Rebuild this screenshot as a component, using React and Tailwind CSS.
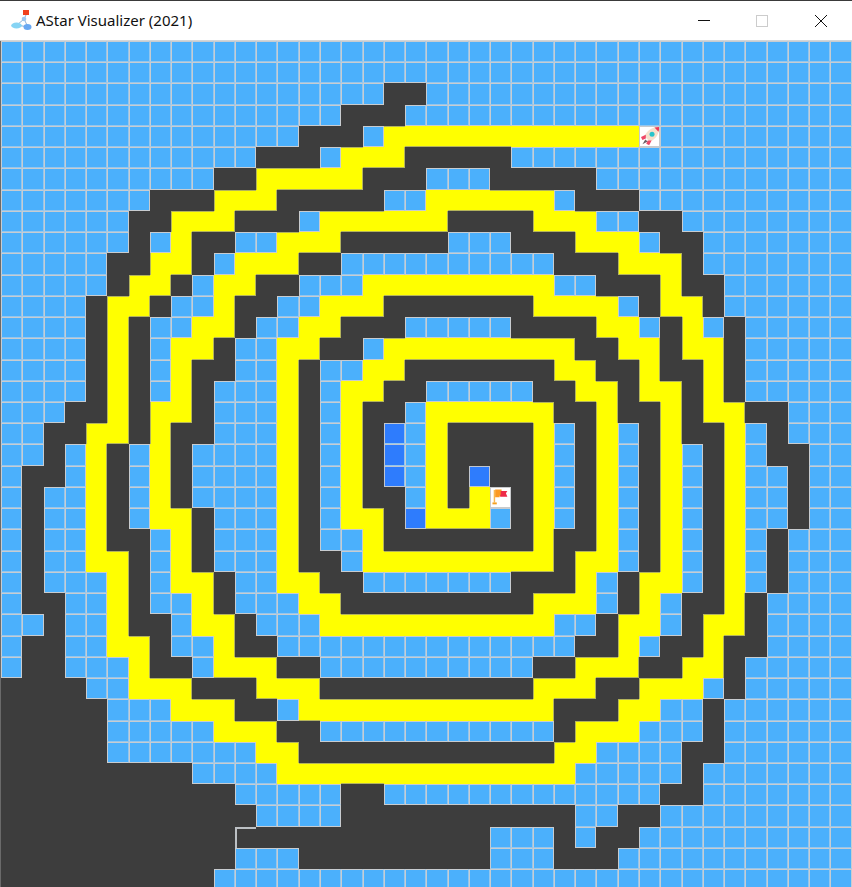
import React from "react";

const SPEC = [
  ".:39",
  ".:39",
  ".:17 #:19 .:39",
  ".:15 #:18 .:39",
  ".:13 #:16 .:17 Y:29 S:30 .:39",
  ".:11 #:14 .:15 Y:18 #:23 .:39",
  ".:9 #:11 Y:16 #:19 .:22 #:27 .:39",
  ".:6 #:9 Y:12 #:17 .:19 Y:25 .:26 #:29 .:39",
  ".:5 #:7 Y:10 #:13 .:14 Y:20 #:24 Y:27 .:29 #:31 .:39",
  ".:5 #:6 .:7 Y:8 #:10 .:12 Y:15 #:20 .:23 #:26 Y:29 .:30 #:32 .:39",
  ".:4 #:6 Y:8 #:9 .:10 Y:13 #:15 .:25 #:28 Y:31 #:32 .:39",
  ".:4 #:5 Y:7 #:8 .:9 Y:11 #:13 .:16 Y:25 .:27 #:30 Y:31 #:33 .:39",
  ".:3 #:4 Y:6 #:7 .:9 Y:10 #:12 .:14 Y:17 #:24 Y:28 .:29 #:30 Y:32 #:33 .:39",
  ".:3 #:4 Y:5 #:6 .:8 Y:10 #:11 .:13 Y:15 #:18 .:23 #:27 Y:29 .:30 #:31 Y:32 .:33 #:34 .:39",
  ".:3 #:4 Y:5 #:6 .:7 Y:9 #:10 .:12 Y:14 #:16 .:17 Y:26 #:28 Y:30 #:31 Y:33 #:34 .:39",
  ".:3 #:4 Y:5 #:6 .:7 Y:8 #:10 .:12 Y:13 #:14 .:16 Y:18 #:25 Y:27 #:29 Y:30 #:32 Y:33 #:34 .:39",
  ".:3 #:4 Y:5 #:6 .:7 Y:8 #:9 .:12 Y:13 #:14 .:15 Y:17 #:19 .:24 #:26 Y:28 #:29 Y:31 #:32 Y:33 #:34 .:39",
  ".:2 #:4 Y:5 #:6 Y:8 #:9 .:12 Y:13 #:14 .:15 Y:16 #:18 .:19 Y:25 #:27 Y:28 #:30 Y:31 #:32 Y:34 #:36 .:39",
  ".:1 #:3 Y:5 #:6 Y:7 #:9 .:12 Y:13 #:14 .:15 Y:16 #:17 B:18 .:19 Y:20 #:24 Y:25 .:26 #:27 Y:28 .:29 #:30 Y:31 #:33 Y:34 .:35 #:36 .:39",
  ".:1 #:2 .:3 Y:4 #:5 .:6 Y:7 #:8 .:12 Y:13 #:14 .:15 Y:16 #:17 B:18 .:19 Y:20 #:24 Y:25 .:26 #:27 Y:28 .:29 #:30 Y:31 .:32 #:33 Y:34 .:35 #:37 .:39",
  ".:0 #:2 .:3 Y:4 #:5 .:6 Y:7 #:8 .:12 Y:13 #:14 .:15 Y:16 #:17 B:18 .:19 Y:20 #:21 B:22 #:24 Y:25 .:26 #:27 Y:28 .:29 #:30 Y:31 .:32 #:33 Y:34 .:36 #:37 .:39",
  ".:0 #:1 .:3 Y:4 #:5 .:6 Y:7 #:8 .:12 Y:13 #:14 .:15 Y:16 #:18 .:19 Y:20 #:21 Y:22 F:23 #:24 Y:25 .:26 #:27 Y:28 .:29 #:30 Y:31 .:32 #:33 Y:34 .:36 #:37 .:39",
  ".:0 #:1 .:3 Y:4 #:5 .:6 Y:8 #:9 .:12 Y:13 #:14 .:15 Y:17 #:18 B:19 Y:22 .:23 #:24 Y:25 .:26 #:27 Y:28 .:29 #:30 Y:31 .:32 #:33 Y:34 .:36 #:37 .:39",
  ".:0 #:1 .:3 Y:4 #:6 .:7 Y:8 #:9 .:12 Y:13 #:14 .:16 Y:17 #:24 Y:25 #:27 Y:28 .:29 #:30 Y:31 .:32 #:33 Y:34 .:35 #:36 .:39",
  ".:0 #:1 .:3 Y:5 #:6 .:7 Y:8 #:9 .:12 Y:13 #:15 .:16 Y:25 #:26 Y:28 .:29 #:30 Y:31 .:32 #:33 Y:34 .:35 #:36 .:39",
  ".:0 #:1 .:4 Y:5 #:6 .:7 Y:9 #:10 .:12 Y:14 #:16 .:23 #:26 Y:27 .:28 #:29 Y:31 .:32 #:33 Y:34 .:35 #:36 .:39",
  ".:0 #:2 .:4 Y:5 #:6 .:8 Y:9 #:10 .:13 Y:15 #:24 Y:27 .:28 #:29 Y:30 .:31 #:33 Y:34 #:35 .:39",
  ".:1 #:2 .:4 Y:5 #:7 .:8 Y:10 #:11 .:14 Y:25 .:27 #:28 Y:30 .:31 #:32 Y:34 #:35 .:39",
  ".:0 #:2 .:4 Y:6 #:7 .:9 Y:10 #:12 .:26 #:28 Y:29 .:30 #:32 Y:33 #:35 .:39",
  ".:0 #:2 .:5 Y:6 #:8 .:9 Y:12 #:14 .:24 #:26 Y:29 #:31 Y:33 #:34 .:39",
  "#:3 .:5 Y:8 #:11 Y:14 #:24 Y:27 #:29 Y:32 .:33 #:34 .:39",
  "#:4 .:7 Y:10 #:12 .:13 Y:25 #:28 Y:30 .:32 #:33 .:39",
  "#:4 .:9 Y:12 #:14 .:25 #:26 Y:29 .:32 #:33 .:39",
  "#:4 .:11 Y:13 #:25 Y:27 .:31 #:33 .:39",
  "#:8 .:12 Y:26 .:31 #:32 .:39",
  "#:10 .:15 #:17 .:30 #:32 .:39",
  "#:11 .:15 #:26 .:28 #:30 .:39",
  "#:22 .:25 #:26 .:27 #:29 .:39",
  "#:10 .:13 #:22 .:25 #:28 .:39",
  "#:9 .:39",
];

const GRID = SPEC.map((line) => {
  let out = "";
  for (const tok of line.split(" ")) {
    const [ch, end] = tok.split(":");
    while (out.length <= Number(end)) out += ch;
  }
  return out;
});

const at = (r, c) => (GRID[r] && GRID[r][c]) || "";
const isOpen = (ch) => ch === "." || ch === "B" || ch === "S" || ch === "F";

function Rocket() {
  return (
    <svg viewBox="0 0 20 20" className="block w-full h-full">
      <path d="M20 0c-7 0-12 3-15.500 9.500L10.500 15.500C17 12 20 7 20 0z" fill="#f6e0cc" />
      <path d="M15 .5 20 0c0 2-.3 3.500-.8 5z" fill="#ee3a58" />
      <circle cx="12.500" cy="7.500" r="2.600" fill="#27c4cb" />
      <path d="M6 8 1 10.500l1.500 3L6 12z" fill="#ee4768" />
      <path d="M12 14 9.500 19l-3-1.500L8 14z" fill="#ee4768" />
      <path d="M5.500 13 2.500 18 8 15z" fill="#6a5f66" />
    </svg>
  );
}

function Flag() {
  return (
    <svg viewBox="0 0 20 20" className="block w-full h-full">
      <rect x="2.800" y="2" width="1.500" height="13" fill="#f8b850" />
      <path d="M1.500 15h4.500v2H1.500z" fill="#f5a020" />
      <path d="M4.300 1.500H11V3h3v5H9v1.500H4.300z" fill="#fb9a22" />
      <path d="M10 3h7l-1.500 2.500L17 9H9.500V7H10z" fill="#ee2a48" />
    </svg>
  );
}

function Cell({ r, c }) {
  const ch = at(r, c);
  if (ch === "#") {
    if (r === 37 && c === 11) {
      return <div className="bg-[#3d3d3d] border-l-2 border-t-2 border-[#bcc0c4]" />;
    }
    return <div className="bg-[#3d3d3d]" />;
  }
  if (ch === "Y") {
    const t = at(r - 1, c) === "#" ? "border-t" : "";
    const l = at(r, c - 1) === "#" ? "border-l" : "";
    const b = at(r + 1, c) === "#" ? "border-b" : "";
    const e = at(r, c + 1) === "#" ? "border-r" : "";
    return <div className={`bg-[#ffff00] border-[#b4b45c] ${t} ${l} ${b} ${e}`} />;
  }
  const right = c < 39 && isOpen(at(r, c + 1));
  const below = r < 39 && isOpen(at(r + 1, c));
  const soft = `border-r border-b ${right ? "border-r-[#93c6ee]" : ""} ${below ? "border-b-[#93c6ee]" : ""}`;
  if (ch === "S") return <div className="bg-white border border-[#c8cacc]"><Rocket /></div>;
  if (ch === "F") return <div className="bg-white border border-[#c8cacc]"><Flag /></div>;
  if (ch === "B") return <div className={`bg-[#2e7cfd] border-l border-t border-[#c0c6d0] ${soft}`} />;
  return <div className={`bg-[#4bb0fc] border-l border-t border-[#c8ccd0] ${soft}`} />;
}

function Logo() {
  return (
    <svg width="24" height="24" viewBox="0 0 24 24" className="shrink-0">
      <path d="M15 10 8 16M15 10l4 8M8 16l11 2M17 6l-2 4" stroke="#8fb0d4" strokeWidth="1" fill="none" />
      <rect x="14" y="1" width="6" height="5" fill="#f0401c" />
      <circle cx="15" cy="10" r="2.300" fill="#9cc6ee" />
      <ellipse cx="7.500" cy="16.500" rx="5.300" ry="3" fill="#86d4f4" />
      <ellipse cx="18.500" cy="18" rx="4" ry="3" fill="#68a8f2" />
    </svg>
  );
}

export default function App() {
  return (
    <div className="w-[852px] h-[887px] overflow-hidden bg-white font-['Noto_Sans','Open_Sans',sans-serif]">
      <div className="h-[1px] bg-[#3a3a3a]" />
      <div className="h-[39px] flex items-center bg-white">
        <div className="ml-[9px] mr-[3px] flex items-center"><Logo /></div>
        <span className="text-[15px] text-[#111111] leading-none">AStar Visualizer (2021)</span>
        <div className="ml-auto mr-[1px] flex items-center">
          <div className="w-[58px] flex justify-center">
            <svg width="12" height="2" viewBox="0 0 12 2"><rect width="12" height="1" fill="#111111" /></svg>
          </div>
          <div className="w-[58px] flex justify-center">
            <svg width="12" height="12" viewBox="0 0 12 12"><rect x="0.500" y="0.500" width="11" height="11" fill="none" stroke="#cccccc" /></svg>
          </div>
          <div className="w-[60px] flex justify-center">
            <svg width="12" height="12" viewBox="0 0 12 12"><path d="M0 0l12 12M12 0L0 12" stroke="#111111" strokeWidth="1" /></svg>
          </div>
        </div>
      </div>
      <div className="h-[1px] bg-[#d4d6d8]" />
      <div className="pl-[1px] bg-[#6a6a6a] h-[846px]">
        <div className="grid grid-cols-[repeat(40,21.27px)] auto-rows-[21.24px]">
          {GRID.map((row, r) => row.split("").map((_, c) => <Cell key={`${r}-${c}`} r={r} c={c} />))}
        </div>
      </div>
    </div>
  );
}
